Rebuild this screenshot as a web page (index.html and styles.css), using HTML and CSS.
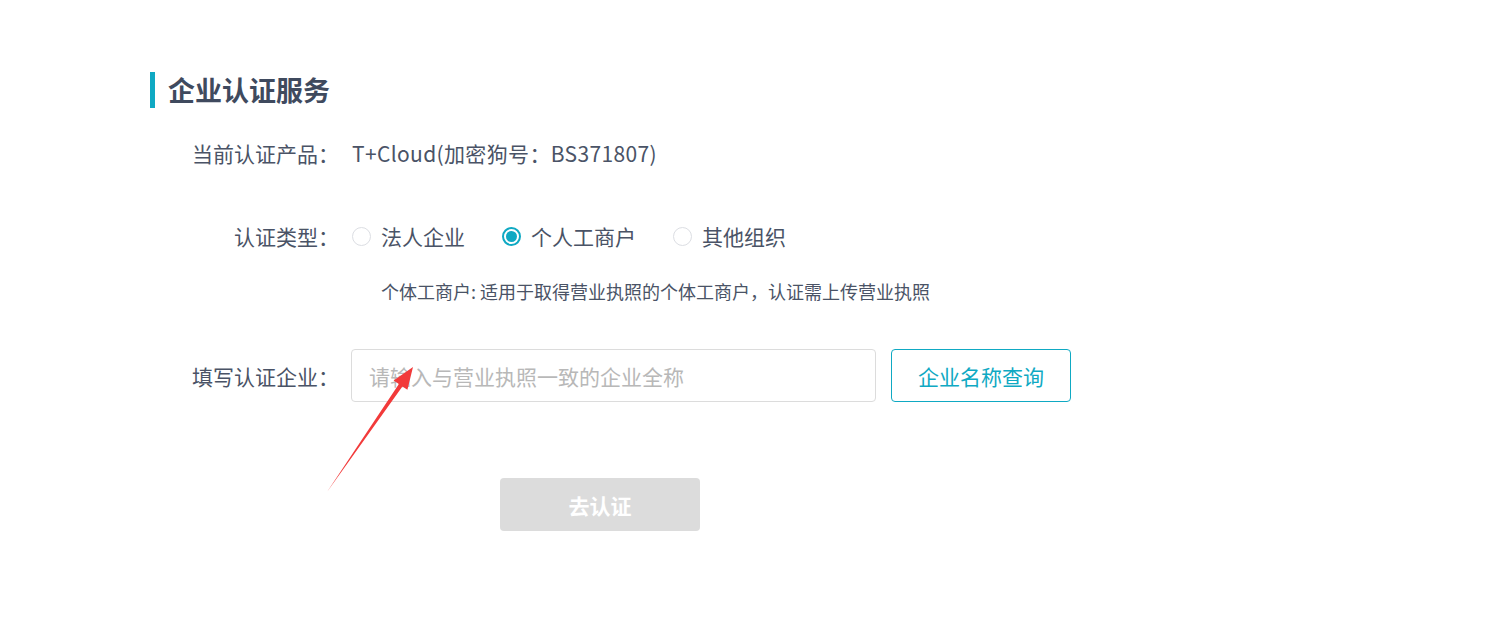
FILE: index.html
```html
<!DOCTYPE html>
<html lang="zh-CN">
<head>
<meta charset="utf-8">
<title>企业认证服务</title>
<link rel="stylesheet" href="styles.css">
</head>
<body>
<div class="page">
  <h1 class="title">企业认证服务</h1>
  <div class="form">
    <div class="row row-product">
      <div class="label">当前认证产品：</div>
      <div class="value product">T+Cloud(加密狗号：BS371807)</div>
    </div>
    <div class="row row-type">
      <div class="label">认证类型：</div>
      <div class="value radios">
        <label class="radio"><span class="dot"></span><span>法人企业</span></label>
        <label class="radio checked"><span class="dot"></span><span>个人工商户</span></label>
        <label class="radio"><span class="dot"></span><span>其他组织</span></label>
      </div>
    </div>
    <div class="hint">个体工商户: 适用于取得营业执照的个体工商户，认证需上传营业执照</div>
    <div class="row row-company">
      <div class="label">填写认证企业：</div>
      <div class="value fields">
        <input class="input" type="text" placeholder="请输入与营业执照一致的企业全称">
        <button class="btn-outline" type="button">企业名称查询</button>
      </div>
    </div>
    <div class="actions">
      <button class="btn-submit" type="button">去认证</button>
    </div>
  </div>
  <svg class="arrow" width="1512" height="627" viewBox="0 0 1512 627">
    <polygon points="327,492 398.9,384 393.6,380.4 413,367 407.4,389.8 402.4,386.4" fill="#f23a3a"/>
  </svg>
</div>
</body>
</html>
```

FILE: styles.css
```css
html, body {
  margin: 0;
  padding: 0;
  background: #ffffff;
}
body {
  font-family: "Noto Sans CJK SC", "Noto Sans", sans-serif;
  color: #4a5366;
}
.page {
  position: relative;
  width: 1512px;
  height: 627px;
  padding: 72px 0 0 150px;
  box-sizing: border-box;
}
.title {
  margin: 0;
  height: 36px;
  line-height: 36px;
  border-left: 5px solid #0fa9c3;
  padding-left: 13px;
  font-size: 27px;
  font-weight: 700;
  color: #3f4a5e;
}
.form {
  display: flex;
  flex-direction: column;
}
.row {
  display: flex;
  align-items: center;
  gap: 13px;
}
.label {
  width: 189px;
  text-align: right;
  font-size: 21px;
  color: #4a5366;
  white-space: nowrap;
  flex: none;
}
.value {
  font-size: 21px;
  color: #4a5366;
}
.product {
  letter-spacing: 0.35px;
}
.row-product {
  height: 40px;
  margin-top: 25px;
}
.row-type {
  height: 40px;
  margin-top: 43px;
}
.radios {
  display: flex;
  align-items: center;
  gap: 37px;
}
.radio {
  display: flex;
  align-items: center;
  gap: 10px;
}
.dot {
  width: 19px;
  height: 19px;
  border: 1px solid #dcdee3;
  border-radius: 50%;
  box-sizing: border-box;
  position: relative;
  background: #fff;
}
.radio.checked .dot {
  border: 2px solid #0fa9c3;
}
.radio.checked .dot::after {
  content: "";
  position: absolute;
  left: 2px;
  top: 2px;
  width: 11px;
  height: 11px;
  border-radius: 50%;
  background: #0fa9c3;
}
.hint {
  margin: 23px 0 0 231px;
  height: 24px;
  line-height: 24px;
  font-size: 18px;
  color: #4a5366;
  white-space: nowrap;
}
.row-company {
  margin-top: 46px;
  height: 53px;
}
.fields {
  display: flex;
  align-items: center;
  gap: 15px;
  margin-left: -1px;
}
.input {
  width: 525px;
  height: 53px;
  box-sizing: border-box;
  border: 1px solid #dcdcdc;
  border-radius: 4px;
  padding: 0 17px;
  font-family: inherit;
  font-size: 21px;
  color: #4a5366;
  outline: none;
}
.input::placeholder {
  color: #b8b8b8;
}
.btn-outline {
  width: 180px;
  height: 53px;
  box-sizing: border-box;
  border: 1px solid #0fa9c3;
  border-radius: 4px;
  background: #fff;
  color: #0fa9c3;
  font-family: inherit;
  font-size: 21px;
  padding: 0;
}
.actions {
  margin-top: 76px;
  padding-left: 350px;
}
.btn-submit {
  width: 200px;
  height: 53px;
  border: none;
  border-radius: 4px;
  background: #dcdcdc;
  color: #ffffff;
  font-family: inherit;
  font-size: 21px;
  font-weight: 700;
  padding: 0;
}
.arrow {
  position: absolute;
  left: 0;
  top: 0;
  pointer-events: none;
}
```
